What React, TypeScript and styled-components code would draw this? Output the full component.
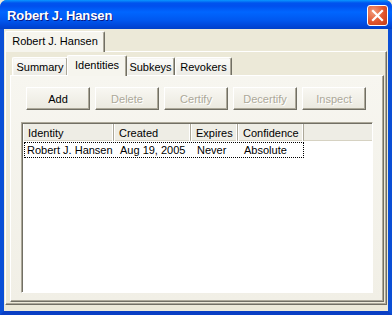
import React from "react";
import styled, { createGlobalStyle } from "styled-components";

const Global = createGlobalStyle`
  html, body { margin: 0; padding: 0; background: #ECE9D8; }
  body { font-family: "Liberation Sans", Arial, sans-serif; font-size: 11px; color: #000; }
  * { box-sizing: border-box; }
`;

const Window = styled.div`
  width: 392px;
  height: 315px;
  display: flex;
  flex-direction: column;
  background: #0054e3;
  border-radius: 7px 7px 0 0;
  overflow: hidden;
`;

const TitleBar = styled.div`
  height: 29px;
  flex: none;
  display: flex;
  align-items: center;
  justify-content: space-between;
  padding: 0 4px 0 7px;
  background: linear-gradient(
    to bottom,
    #0997ff 0px,
    #0053ee 3px,
    #0050ee 6px,
    #0066ff 12px,
    #0058f0 20px,
    #0046d8 26px,
    #0040c8 29px
  );
`;

const Title = styled.span`
  font-family: "Liberation Sans", Arial, sans-serif;
  font-weight: bold;
  font-size: 13px;
  color: #fff;
  text-shadow: 1px 1px 0 #0a1883;
  letter-spacing: -0.1px;
  margin-top: 1px;
`;

const CloseButton = styled.div`
  width: 21px;
  height: 21px;
  border: 1px solid #fff;
  border-radius: 3px;
  background: radial-gradient(circle at 30% 30%, #f29b7a 0%, #e0542c 55%, #c13b17 100%);
  display: flex;
  align-items: center;
  justify-content: center;
  margin-top: 1px;
`;

const Frame = styled.div`
  flex: 1;
  display: flex;
  flex-direction: column;
  background: #ece9d8;
  border-left: 4px solid #0a4fd6;
  border-right: 4px solid #0a4fd6;
  border-bottom: 4px solid #0a3fc4;
  padding: 1px 1px 6px 1px;
`;

const TabStrip = styled.div<{ $pad: number }>`
  display: flex;
  align-items: flex-end;
  height: 21px;
  flex: none;
  padding-left: ${(p) => p.$pad}px;
`;

const Tab = styled.div<{ $active?: boolean; $w: number }>`
  width: ${(p) => p.$w}px;
  height: ${(p) => (p.$active ? 21 : 18)}px;
  display: flex;
  align-items: center;
  justify-content: center;
  padding-bottom: ${(p) => (p.$active ? 2 : 0)}px;
  background: ${(p) => (p.$active ? "#f6f5ee" : "linear-gradient(to bottom, #fcfcfb, #ecebe4)")};
  border-top: 1px solid #fff;
  border-left: 1px solid #fff;
  border-right: 1px solid #716f64;
  box-shadow: inset -1px 0 0 #aca899, inset 1px 1px 0 #f6f5f0;
  border-radius: 2px 2px 0 0;
  margin-right: ${(p) => (p.$active ? -1 : 0)}px;
  margin-left: ${(p) => (p.$active ? -1 : 0)}px;
  position: relative;
  z-index: ${(p) => (p.$active ? 2 : 1)};
  margin-bottom: ${(p) => (p.$active ? -1 : 0)}px;
  white-space: nowrap;
`;

const Panel = styled.div<{ $pad: string; $bg: string }>`
  flex: 1;
  display: flex;
  flex-direction: column;
  padding: ${(p) => p.$pad};
  background: ${(p) => p.$bg};
  border-top: 1px solid #fff;
  border-left: 1px solid #fff;
  border-right: 1px solid #716f64;
  border-bottom: 1px solid #716f64;
  box-shadow: inset -1px -1px 0 #aca899;
`;

const ButtonRow = styled.div`
  display: flex;
  gap: 5px;
  margin-left: 5px;
  height: 23px;
  flex: none;
`;

const Button = styled.div<{ $disabled?: boolean }>`
  width: 64px;
  height: 23px;
  display: flex;
  align-items: center;
  justify-content: center;
  color: ${(p) => (p.$disabled ? "#aca899" : "#000")};
  text-shadow: ${(p) => (p.$disabled ? "1px 1px 0 #fff" : "none")};
  background: linear-gradient(to bottom, #f8f7f2, #ebe9df);
  border-top: 1px solid #fff;
  border-left: 1px solid #fff;
  border-right: 1px solid #716f64;
  border-bottom: 1px solid #716f64;
  box-shadow: inset -1px -1px 0 #aca899;
`;

const ListView = styled.div`
  flex: 1;
  margin-top: 12px;
  background: #fff;
  border-top: 1px solid #aca899;
  border-left: 1px solid #aca899;
  border-right: 1px solid #fff;
  border-bottom: 1px solid #fff;
  box-shadow: inset 1px 1px 0 #716f64;
  padding: 1px 0 0 1px;
  display: flex;
  flex-direction: column;
`;

const Header = styled.div`
  display: flex;
  height: 17px;
  background: #eeede5;
  box-shadow: inset 0 -1px 0 #d6d2c2;
`;

const HeaderCell = styled.div<{ $w: number }>`
  width: ${(p) => p.$w}px;
  padding-left: 5px;
  display: flex;
  align-items: center;
  border-right: 1px solid #aca899;
  box-shadow: inset -1px 0 0 #fff, inset 1px 0 0 #fff;
  white-space: nowrap;
`;

const Row = styled.div`
  display: flex;
  height: 16px;
  margin: 1px 0 0 1px;
  width: fit-content;
  outline: 1px dotted #000;
  outline-offset: -1px;
`;

const Cell = styled.div<{ $w: number; $pad: number }>`
  width: ${(p) => p.$w}px;
  padding-left: ${(p) => p.$pad}px;
  display: flex;
  align-items: center;
  white-space: nowrap;
`;

const cols = [
  { label: "Identity", w: 91, value: "Robert J. Hansen" },
  { label: "Created", w: 77, value: "Aug 19, 2005" },
  { label: "Expires", w: 47, value: "Never" },
  { label: "Confidence", w: 66, value: "Absolute" },
];

const innerTabs = [
  { label: "Summary", w: 56 },
  { label: "Identities", w: 60, active: true },
  { label: "Subkeys", w: 49 },
  { label: "Revokers", w: 57 },
];

export default function App() {
  return (
    <>
      <Global />
      <Window>
        <TitleBar>
          <Title>Robert J. Hansen</Title>
          <CloseButton>
            <svg width="13" height="13" viewBox="0 0 13 13">
              <path d="M2 2 L11 11 M11 2 L2 11" stroke="#fff" strokeWidth="2.2" strokeLinecap="square" />
            </svg>
          </CloseButton>
        </TitleBar>
        <Frame>
          <TabStrip $pad={0}>
            <Tab $active $w={100} style={{ marginLeft: 0 }}>Robert J. Hansen</Tab>
          </TabStrip>
          <Panel $pad="2px 2px 2px 4px" $bg="#ece9d8">
            <TabStrip $pad={2}>
              {innerTabs.map((t) => (
                <Tab key={t.label} $w={t.w} $active={t.active}>
                  {t.label}
                </Tab>
              ))}
            </TabStrip>
            <Panel $pad="11px 10px 8px 10px" $bg="linear-gradient(to bottom, #f7f6f0, #f1efe6)">
              <ButtonRow>
                <Button>Add</Button>
                <Button $disabled>Delete</Button>
                <Button $disabled>Certify</Button>
                <Button $disabled>Decertify</Button>
                <Button $disabled>Inspect</Button>
              </ButtonRow>
              <ListView>
                <Header>
                  {cols.map((c) => (
                    <HeaderCell key={c.label} $w={c.w}>
                      {c.label}
                    </HeaderCell>
                  ))}
                </Header>
                <Row>
                  {cols.map((c, i) => (
                    <Cell key={c.label} $w={c.w - (i === 0 ? 1 : 0)} $pad={i === 0 ? 3 : 6}>
                      {c.value}
                    </Cell>
                  ))}
                </Row>
              </ListView>
            </Panel>
          </Panel>
        </Frame>
      </Window>
    </>
  );
}
